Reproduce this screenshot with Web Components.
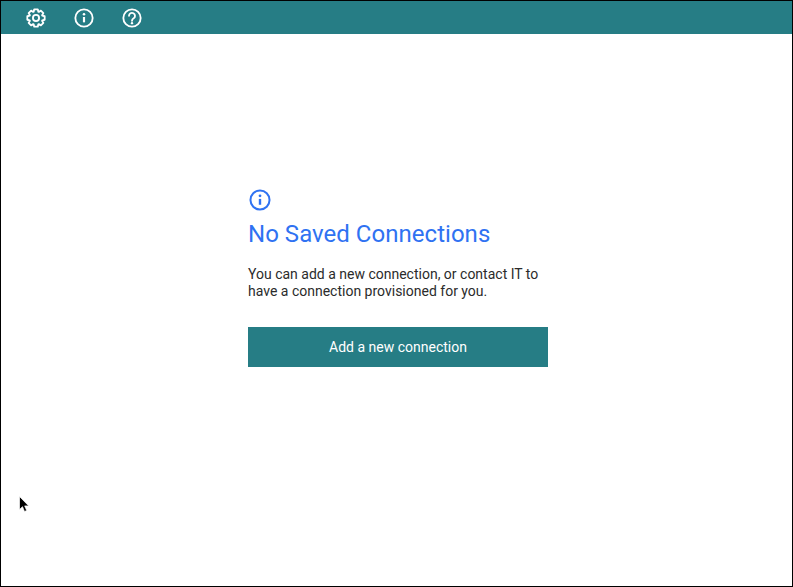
<!DOCTYPE html>
<html>
<head>
<meta charset="utf-8">
<style>
  html, body { margin: 0; height: 100%; background: #fff; }
  body { font-family: Roboto, "Liberation Sans", sans-serif; }
</style>
</head>
<body>
<app-shell>
  <app-toolbar>
    <tool-icon name="gear"></tool-icon>
    <tool-icon name="info"></tool-icon>
    <tool-icon name="help"></tool-icon>
  </app-toolbar>
  <empty-state heading="No Saved Connections" action="Add a new connection">
    You can add a new connection, or contact IT to<br>have a connection provisioned for you.
  </empty-state>
  <mouse-cursor></mouse-cursor>
</app-shell>

<script>
// 8 tooth cog outline, centred on 12,12
function cogPath(outer, root) {
  let d = '';
  for (let i = 0; i < 8; i++) {
    const a = i * Math.PI / 4 - Math.PI / 2;
    const pts = [[root, -0.36], [outer, -0.2], [outer, 0.2], [root, 0.36]];
    pts.forEach(([r, o], n) => {
      const x = (12 + r * Math.cos(a + o)).toFixed(2);
      const y = (12 + r * Math.sin(a + o)).toFixed(2);
      d += (i === 0 && n === 0 ? 'M' : 'L') + x + ' ' + y;
    });
  }
  return d + 'z';
}

const ICONS = {
  gear: `<svg viewBox="0 0 24 24" fill="none" stroke="currentColor" stroke-width="2.2" stroke-linejoin="round">
    <path d="${cogPath(10.6, 8)}"/>
    <circle cx="12" cy="12" r="3.7"/></svg>`,
  info: `<svg viewBox="0 0 24 24" fill="none" stroke="currentColor" stroke-width="2.2">
    <circle cx="12" cy="12" r="10.4"/>
    <path d="M12 10.8v6.4" stroke-width="2.6"/>
    <circle cx="12" cy="7.4" r="1.5" fill="currentColor" stroke="none"/></svg>`,
  help: `<svg viewBox="0 0 24 24" fill="none" stroke="currentColor" stroke-width="2.2">
    <circle cx="12" cy="12" r="10.4"/>
    <path d="M8.4 9.4a3.6 3.6 0 1 1 5.6 3c-1.3.8-2 1.4-2 2.9" stroke-linecap="round"/>
    <circle cx="12" cy="18.2" r="1.4" fill="currentColor" stroke="none"/></svg>`
};

class AppShell extends HTMLElement {
  constructor() {
    super();
    this.attachShadow({ mode: 'open' });
    this.shadowRoot.innerHTML = `
      <style>
        :host {
          display: flex;
          flex-direction: column;
          position: relative;
          box-sizing: border-box;
          height: 587px;
          border: 1px solid #000;
          background: #fff;
          overflow: hidden;
        }
      </style>
      <slot></slot>`;
  }
}

class AppToolbar extends HTMLElement {
  constructor() {
    super();
    this.attachShadow({ mode: 'open' });
    this.shadowRoot.innerHTML = `
      <style>
        :host {
          display: flex;
          align-items: center;
          flex: none;
          gap: 28px;
          height: 33px;
          padding-left: 25px;
          background: #267d85;
          color: #fff;
        }
      </style>
      <slot></slot>`;
  }
}

class ToolIcon extends HTMLElement {
  constructor() {
    super();
    this.attachShadow({ mode: 'open' });
    this.shadowRoot.innerHTML = `
      <style>
        :host { display: block; width: 20px; height: 20px; }
        svg { display: block; width: 100%; height: 100%; overflow: visible; }
      </style>
      ${ICONS[this.getAttribute('name')] || ''}`;
  }
}

class EmptyState extends HTMLElement {
  constructor() {
    super();
    this.attachShadow({ mode: 'open' });
  }

  connectedCallback() {
    const heading = this.getAttribute('heading') || '';
    const action = this.getAttribute('action') || '';
    this.shadowRoot.innerHTML = `
      <style>
        :host {
          display: flex;
          flex-direction: column;
          align-self: flex-start;
          width: 300px;
          margin: 155px 0 0 247px;
        }
        .icon { width: 22px; height: 22px; margin-left: 1px; color: #2f72f2; }
        .icon svg { display: block; width: 100%; height: 100%; }
        h2 {
          margin: 9px 0 0;
          font: 400 24px/28px Roboto, sans-serif;
          letter-spacing: .03px;
          color: #2f72f2;
        }
        p {
          margin: 18px 0 0;
          font: 400 14px/17px Roboto, sans-serif;
          color: #2b2b2b;
        }
        button {
          display: block;
          width: 100%;
          height: 40px;
          margin-top: 27px;
          border: 0;
          padding: 0;
          background: #267d85;
          color: #fff;
          font: 400 14px Roboto, sans-serif;
        }
      </style>
      <div class="icon">${ICONS.info}</div>
      <h2>${heading}</h2>
      <p><slot></slot></p>
      <button>${action}</button>`;
  }
}

class MouseCursor extends HTMLElement {
  constructor() {
    super();
    this.attachShadow({ mode: 'open' });
    this.shadowRoot.innerHTML = `
      <style>
        :host { position: absolute; left: 18px; top: 495px; width: 11px; height: 17px; }
        svg { display: block; }
      </style>
      <svg width="11" height="17" viewBox="0 0 11 17">
        <path d="M.5.5v13l3-2.8 2 4.8 2.2-1-2-4.6h4z" fill="#000" stroke="#fff" stroke-width=".7"/>
      </svg>`;
  }
}

customElements.define('app-shell', AppShell);
customElements.define('app-toolbar', AppToolbar);
customElements.define('tool-icon', ToolIcon);
customElements.define('empty-state', EmptyState);
customElements.define('mouse-cursor', MouseCursor);
</script>
</body>
</html>
